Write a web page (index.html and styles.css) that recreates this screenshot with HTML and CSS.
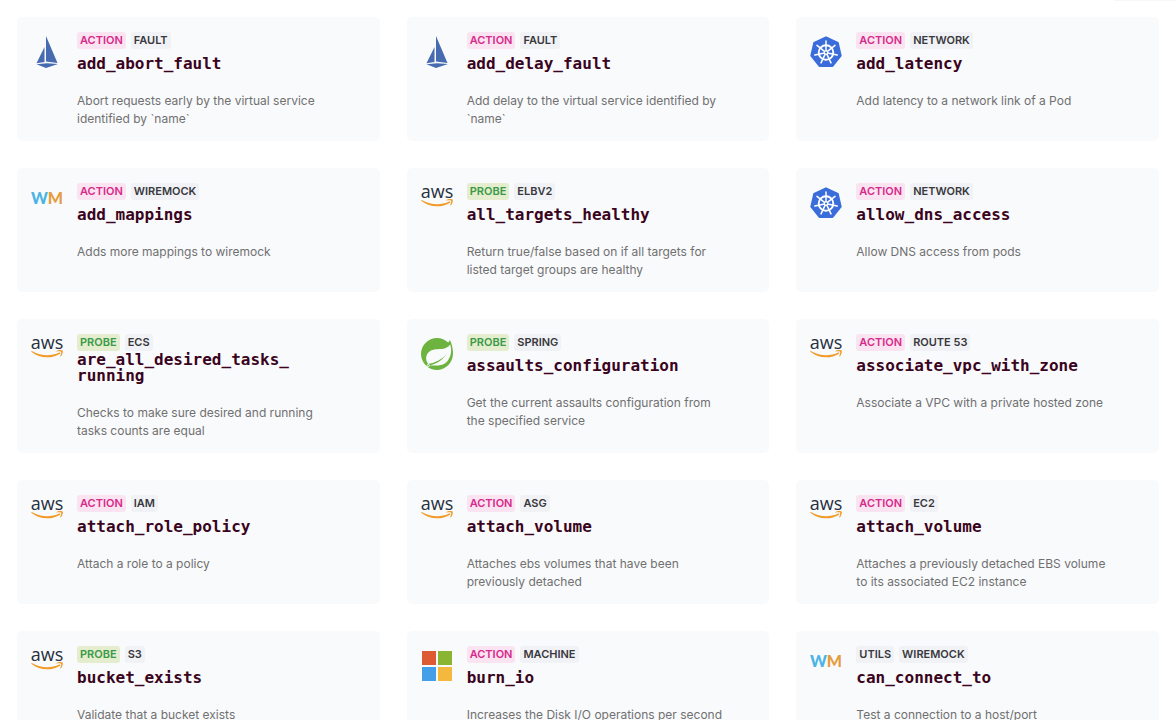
FILE: index.html
```html
<!DOCTYPE html>
<html lang="en">
<head>
<meta charset="utf-8">
<meta name="viewport" content="width=device-width, initial-scale=1">
<title>Actions and probes</title>
<link rel="stylesheet" href="styles.css">
</head>
<body>
<svg class="sprite" aria-hidden="true">
  <symbol id="istio" viewBox="0 0 32 32">
    <path fill="#466bb0" d="M13.500 11v15L5.500 27.200zM15 0l11.500 27-11.500-1.500zM5.500 28.300l10.500-1 11 .7L15 32z"/>
  </symbol>
  <symbol id="kube" viewBox="0 0 32 32">
    <path fill="#3a6ddb" stroke="#3a6ddb" stroke-width="2" stroke-linejoin="round" d="M16 1.300L27.800 7l2.900 12.600L22.500 30h-13L1.300 19.600 4.200 7z"/>
    <g fill="none" stroke="#fff" stroke-linecap="round">
      <circle cx="16" cy="16.500" r="7.300" stroke-width="1.900"/>
      <path stroke-width="1.500" d="M16 15V5M17.200 15.600l7.800-6.200M17.500 16.900l9.700 2.200M16.700 17.900l4.300 9M15.300 17.900l-4.300 9M14.500 16.900l-9.700 2.200M14.800 15.600L7 9.400"/>
      <circle cx="16" cy="16.500" r="1.700" stroke-width="1.200"/>
    </g>
    <circle cx="16" cy="16.500" r="1" fill="#3a6ddb"/>
  </symbol>
  <symbol id="wiremock" viewBox="0 0 32 32">
    <text class="wm wm-w" x="0" y="17">W</text>
    <text class="wm wm-m" x="32" y="17" text-anchor="end">M</text>
  </symbol>
  <symbol id="aws" viewBox="0 0 32 32">
    <text class="aws-word" x="16" y="11" text-anchor="middle">aws</text>
    <path fill="#f29a27" d="M.3 13.200c.2-.4.600-.3 1 0 8.800 5 18.500 5.200 27 1.400.9-.4 1.500.5.700 1.100C20.700 21 8.500 20.600.6 14z"/>
    <path fill="#f29a27" d="M25.500 12.900c1.700-1.200 5.400-1.300 6.100-.5.700.9-.2 4.500-1.900 6-.4.300-.7.100-.5-.3.500-1.200 1.400-3.700.9-4.300s-2.900-.5-4.300-.3c-.5.100-.6-.3-.3-.6z"/>
  </symbol>
  <symbol id="spring" viewBox="0 0 32 32">
    <path fill="#6db33f" d="M29 2c1.800 4 3 8.500 3 13 0 1.300-.1 2.700-.4 4C30 26.500 23.500 32 16 32c-4 0-7.700-1.500-10.500-4l-.6-.5C1.900 24.600 0 20.500 0 16 0 7.200 7.200 0 16 0c4.200 0 8.300 1.700 11.200 4.600C28 3.800 28.600 3 29 2z"/>
    <path fill="#f9fafc" d="M29.200 6.500c-3.900 5.200-9.500 4.300-14.700 4.800C8.600 11.900 4.700 16 5.200 21c.2 2 .9 3.600 2 4.900 5.500-.8 13.500-3.500 18.500-10.400-3.600 6.500-10 10.200-17.200 12 7.500.2 14.500.8 18.700-5.500 3.400-5 3.500-10.500 2-15.500z"/>
    <circle cx="7.200" cy="27.600" r="1.500" fill="#f9fafc"/>
    <circle cx="7.200" cy="27.600" r=".8" fill="#6db33f"/>
  </symbol>
  <symbol id="windows" viewBox="0 0 32 32">
    <path fill="#de5a33" d="M1 1h14v14H1z"/>
    <path fill="#8ab533" d="M17 1h14v14H17z"/>
    <path fill="#449fe8" d="M1 17h14v14H1z"/>
    <path fill="#f5b83f" d="M17 17h14v14H17z"/>
  </symbol>
</svg>
<div class="topline"></div>
<main class="grid">
  <article class="card">
    <svg class="icon"><use href="#istio"/></svg>
    <div class="body">
      <div class="tags"><span class="tag action">ACTION</span><span class="tag">FAULT</span></div>
      <h2 class="title"><a href="#">add_abort_fault</a></h2>
      <p class="desc">Abort requests early by the virtual service identified by `name`</p>
    </div>
  </article>
  <article class="card">
    <svg class="icon"><use href="#istio"/></svg>
    <div class="body">
      <div class="tags"><span class="tag action">ACTION</span><span class="tag">FAULT</span></div>
      <h2 class="title"><a href="#">add_delay_fault</a></h2>
      <p class="desc">Add delay to the virtual service identified by `name`</p>
    </div>
  </article>
  <article class="card">
    <svg class="icon"><use href="#kube"/></svg>
    <div class="body">
      <div class="tags"><span class="tag action">ACTION</span><span class="tag">NETWORK</span></div>
      <h2 class="title"><a href="#">add_latency</a></h2>
      <p class="desc">Add latency to a network link of a Pod</p>
    </div>
  </article>
  <article class="card">
    <svg class="icon"><use href="#wiremock"/></svg>
    <div class="body">
      <div class="tags"><span class="tag action">ACTION</span><span class="tag">WIREMOCK</span></div>
      <h2 class="title"><a href="#">add_mappings</a></h2>
      <p class="desc">Adds more mappings to wiremock</p>
    </div>
  </article>
  <article class="card">
    <svg class="icon"><use href="#aws"/></svg>
    <div class="body">
      <div class="tags"><span class="tag probe">PROBE</span><span class="tag">ELBV2</span></div>
      <h2 class="title"><a href="#">all_targets_healthy</a></h2>
      <p class="desc">Return true/false based on if all targets for listed target groups are healthy</p>
    </div>
  </article>
  <article class="card">
    <svg class="icon"><use href="#kube"/></svg>
    <div class="body">
      <div class="tags"><span class="tag action">ACTION</span><span class="tag">NETWORK</span></div>
      <h2 class="title"><a href="#">allow_dns_access</a></h2>
      <p class="desc">Allow DNS access from pods</p>
    </div>
  </article>
  <article class="card">
    <svg class="icon"><use href="#aws"/></svg>
    <div class="body">
      <div class="tags"><span class="tag probe">PROBE</span><span class="tag">ECS</span></div>
      <h2 class="title"><a href="#">are_all_desired_tasks_<wbr>running</a></h2>
      <p class="desc">Checks to make sure desired and running tasks counts are equal</p>
    </div>
  </article>
  <article class="card">
    <svg class="icon"><use href="#spring"/></svg>
    <div class="body">
      <div class="tags"><span class="tag probe">PROBE</span><span class="tag">SPRING</span></div>
      <h2 class="title"><a href="#">assaults_configuration</a></h2>
      <p class="desc">Get the current assaults configuration from the specified service</p>
    </div>
  </article>
  <article class="card">
    <svg class="icon"><use href="#aws"/></svg>
    <div class="body">
      <div class="tags"><span class="tag action">ACTION</span><span class="tag">ROUTE 53</span></div>
      <h2 class="title"><a href="#">associate_vpc_with_zone</a></h2>
      <p class="desc">Associate a VPC with a private hosted zone</p>
    </div>
  </article>
  <article class="card">
    <svg class="icon"><use href="#aws"/></svg>
    <div class="body">
      <div class="tags"><span class="tag action">ACTION</span><span class="tag">IAM</span></div>
      <h2 class="title"><a href="#">attach_role_policy</a></h2>
      <p class="desc">Attach a role to a policy</p>
    </div>
  </article>
  <article class="card">
    <svg class="icon"><use href="#aws"/></svg>
    <div class="body">
      <div class="tags"><span class="tag action">ACTION</span><span class="tag">ASG</span></div>
      <h2 class="title"><a href="#">attach_volume</a></h2>
      <p class="desc">Attaches ebs volumes that have been previously detached</p>
    </div>
  </article>
  <article class="card">
    <svg class="icon"><use href="#aws"/></svg>
    <div class="body">
      <div class="tags"><span class="tag action">ACTION</span><span class="tag">EC2</span></div>
      <h2 class="title"><a href="#">attach_volume</a></h2>
      <p class="desc">Attaches a previously detached EBS volume to its associated EC2 instance</p>
    </div>
  </article>
  <article class="card">
    <svg class="icon"><use href="#aws"/></svg>
    <div class="body">
      <div class="tags"><span class="tag probe">PROBE</span><span class="tag">S3</span></div>
      <h2 class="title"><a href="#">bucket_exists</a></h2>
      <p class="desc">Validate that a bucket exists</p>
    </div>
  </article>
  <article class="card">
    <svg class="icon"><use href="#windows"/></svg>
    <div class="body">
      <div class="tags"><span class="tag action">ACTION</span><span class="tag">MACHINE</span></div>
      <h2 class="title"><a href="#">burn_io</a></h2>
      <p class="desc">Increases the Disk I/O operations per second</p>
    </div>
  </article>
  <article class="card">
    <svg class="icon"><use href="#wiremock"/></svg>
    <div class="body">
      <div class="tags"><span class="tag">UTILS</span><span class="tag">WIREMOCK</span></div>
      <h2 class="title"><a href="#">can_connect_to</a></h2>
      <p class="desc">Test a connection to a host/port</p>
    </div>
  </article>
</main>
</body>
</html>
```
FILE: styles.css
```css
* { box-sizing: border-box; }

body {
  margin: 0;
  background: #fff;
  font-family: Inter, "Liberation Sans", sans-serif;
  color: #707070;
}

.sprite { display: none; }

.topline {
  width: 62px;
  height: 1px;
  margin-left: auto;
  background: #f7f7f7;
}

.grid {
  display: grid;
  grid-template-columns: repeat(3, minmax(0, 1fr));
  gap: 27px;
  padding: 16px 17px;
}

.card {
  display: flex;
  gap: 14px;
  padding: 15px 14px 13px;
  background: #f9fafc;
  border-radius: 5px;
}

.icon {
  flex: none;
  width: 32px;
  height: 32px;
  margin-top: 4px;
}

.body {
  flex: 1;
  min-width: 0;
  padding-right: 26px;
}

.tags { display: flex; gap: 5px; margin-bottom: 1px; }

.tag {
  padding: 0 3px;
  border-radius: 3px;
  background: #f1f2f5;
  color: #38383d;
  font-size: 11px;
  font-weight: 600;
  line-height: 17px;
}

.action { background: #fbe4f1; color: #d62a8a; }
.probe { background: #e5edcf; color: #3b9a48; }

.title {
  display: flex;
  align-items: flex-end;
  min-height: 22px;
  margin: 0;
  font-family: "DejaVu Sans Mono", monospace;
  font-size: 16px;
  font-weight: 700;
  line-height: 16px;
}

.title a { color: #3a0420; text-decoration: none; }

.desc {
  margin: 20px 0 0;
  font-size: 12px;
  line-height: 18px;
}

.wm {
  font-family: Lato, sans-serif;
  font-size: 16px;
  font-weight: 900;
}
.wm-w { fill: #4cb4e4; }
.wm-m { fill: #e59c3c; }

.aws-word {
  font-family: "Open Sans", sans-serif;
  font-size: 18px;
  font-weight: 500;
  fill: #252f3e;
}
```
